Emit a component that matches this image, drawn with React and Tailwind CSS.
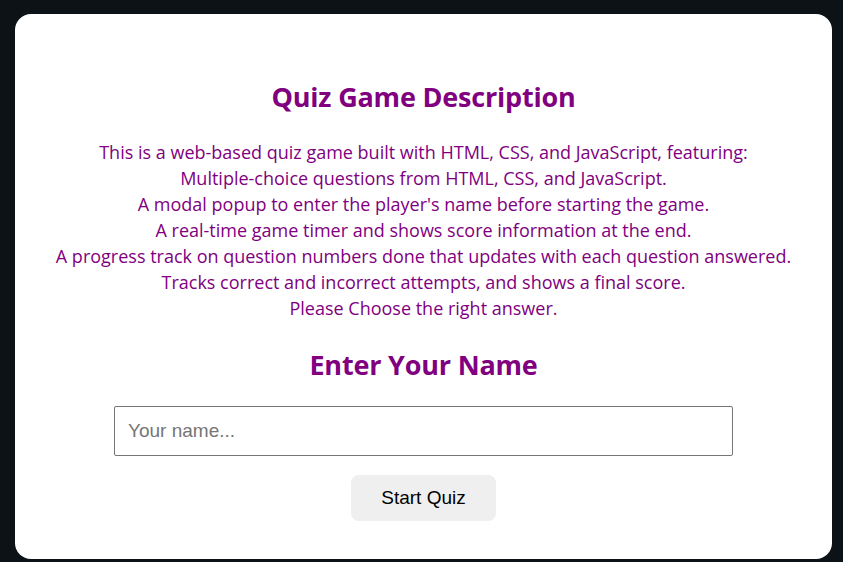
import React, { useState } from "react";

const lines = [
  "This is a web-based quiz game built with HTML, CSS, and JavaScript, featuring:",
  "Multiple-choice questions from HTML, CSS, and JavaScript.",
  "A modal popup to enter the player's name before starting the game.",
  "A real-time game timer and shows score information at the end.",
  "A progress track on question numbers done that updates with each question answered.",
  "Tracks correct and incorrect attempts, and shows a final score.",
  "Please Choose the right answer.",
];

export default function App() {
  const [name, setName] = useState("");

  return (
    <div className="w-full h-[562px] bg-[#0c1215] pt-[14px] pl-[15px] overflow-hidden font-['Open_Sans',sans-serif]">
      <div className="bg-white rounded-[16px] w-[817px] h-[545px] flex flex-col items-center pt-[66px]">
        <h2 className="text-[27px] leading-[34px] font-bold text-[#800080] tracking-[-0.2px]">Quiz Game Description</h2>

        <div className="mt-[25px] text-center text-[18px] leading-[26px] text-[#800080]">
          {lines.map((line) => (
            <p key={line}>{line}</p>
          ))}
        </div>

        <h2 className="mt-[27px] text-[27px] leading-[34px] font-bold text-[#800080] tracking-[-0.2px]">Enter Your Name</h2>

        <input
          type="text"
          className="mt-[24px] w-[619px] h-[50px] border border-[#767676] rounded-[2px] px-[13px] text-[19px] font-['Liberation_Sans',sans-serif] placeholder:text-[#757575] outline-none"
          placeholder="Your name..."
          value={name}
          onChange={(e) => setName(e.target.value)}
        />

        <button className="mt-[19px] w-[145px] h-[46px] bg-[#efefef] rounded-[8px] text-[19px] text-black font-['Liberation_Sans',sans-serif]">
          Start Quiz
        </button>
      </div>
    </div>
  );
}
